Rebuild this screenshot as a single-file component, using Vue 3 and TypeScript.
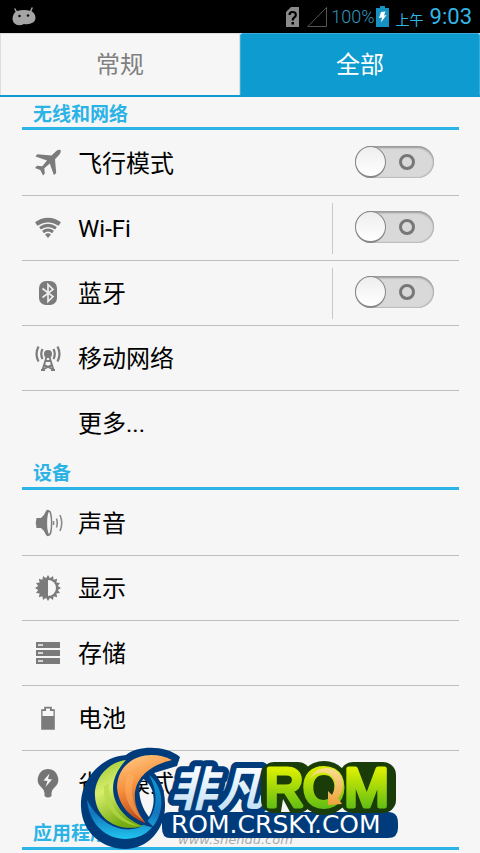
<script setup lang="ts">
import { reactive, ref } from 'vue'

type IconName =
  | 'airplane' | 'wifi' | 'bluetooth' | 'mobile' | 'none'
  | 'sound' | 'display' | 'storage' | 'battery' | 'saver'

interface Item {
  id: string
  label: string
  icon: IconName
  toggle?: boolean
  split?: boolean
}

interface Section {
  id: string
  title: string
  items: Item[]
}

const tabs = ['常规', '全部']
const activeTab = ref('全部')

const sections: Section[] = [
  {
    id: 'wireless',
    title: '无线和网络',
    items: [
      { id: 'airplane', label: '飞行模式', icon: 'airplane', toggle: true },
      { id: 'wifi', label: 'Wi-Fi', icon: 'wifi', toggle: true, split: true },
      { id: 'bluetooth', label: '蓝牙', icon: 'bluetooth', toggle: true, split: true },
      { id: 'mobile', label: '移动网络', icon: 'mobile' },
      { id: 'more', label: '更多...', icon: 'none' },
    ],
  },
  {
    id: 'device',
    title: '设备',
    items: [
      { id: 'sound', label: '声音', icon: 'sound' },
      { id: 'display', label: '显示', icon: 'display' },
      { id: 'storage', label: '存储', icon: 'storage' },
      { id: 'battery', label: '电池', icon: 'battery' },
      { id: 'saver', label: '省电模式', icon: 'saver' },
    ],
  },
  { id: 'apps', title: '应用程序', items: [] },
]

const enabled = reactive<Record<string, boolean>>({
  airplane: false,
  wifi: false,
  bluetooth: false,
})

// Outline of the brightness icon: sixteen short rays around a disc.
const sunPoints = Array.from({ length: 32 }, (_, i) => {
  const radius = i % 2 === 0 ? 13 : 10
  const angle = (i * Math.PI) / 16
  return `${(15 + radius * Math.sin(angle)).toFixed(1)},${(15 - radius * Math.cos(angle)).toFixed(1)}`
}).join(' ')
</script>

<template>
  <div class="page">
    <header class="status">
      <svg class="droid" viewBox="0 0 24 20" aria-hidden="true">
        <path d="M3 2l2 4M20 1l-2 5" stroke="#a5a5a5" stroke-width="1.5" stroke-linecap="round" />
        <path d="M5 4Q12 2 19 4C24 6 25 13 21 15.500Q17 18 12 17Q6 20 2 16C-1 12 1 6 5 4Z" fill="#a5a5a5" />
        <circle cx="7.500" cy="9" r="1.300" fill="#111" />
        <circle cx="16" cy="8.500" r="1.300" fill="#111" />
      </svg>
      <div class="status-right">
        <svg class="sim" viewBox="0 0 13 20" aria-hidden="true">
          <path d="M5 0H13V20H0V5Z" fill="#8a8a8a" />
          <path d="M3.500 8Q3.500 5 6.700 5T9.800 8Q9.800 9.500 8 10.700Q6.700 11.700 6.700 13.500" fill="none" stroke="#000" stroke-width="2.200" />
          <rect x="5.500" y="15" width="2.500" height="2.500" fill="#000" />
        </svg>
        <svg class="signal" viewBox="0 0 20 20" aria-hidden="true">
          <path d="M19.500 0.500V19.500H0.800Z" fill="none" stroke="#555" />
        </svg>
        <span class="percent">100%</span>
        <svg class="charge" viewBox="0 0 13 21" aria-hidden="true">
          <path d="M4 0H9V2H13V21H0V2H4Z" fill="#1591c2" />
          <path d="M5 6L9.500 5.500L8 9.500L10.500 9L5 16.500L6 11.500L3 12Z" fill="#fff" />
        </svg>
        <span class="meridiem">上午</span>
        <time class="clock">9:03</time>
      </div>
    </header>

    <nav class="tabs">
      <button
        v-for="tab in tabs"
        :key="tab"
        type="button"
        class="tab"
        :class="{ active: activeTab === tab }"
        @click="activeTab = tab"
      >{{ tab }}</button>
    </nav>

    <main class="content">
      <section v-for="section in sections" :key="section.id" class="section">
        <h2 class="title"><span>{{ section.title }}</span></h2>
        <ul v-if="section.items.length" class="list">
          <li v-for="item in section.items" :key="item.id" class="row">
            <button type="button" class="entry">
              <svg class="icon" viewBox="0 0 30 30" aria-hidden="true">
                <path
                  v-if="item.icon === 'airplane'"
                  d="M27.500 2C25.500 1.300 24 2.200 22.500 3.700L18.500 7.500L4.200 6.200L2.500 8.500L14 12.500L9.300 18.300L4 17.800L2 20L7.300 22L10 27.500L11.800 25.500L11.300 20.300L16.800 15.500L20.800 27L23.200 25.200L22 11.300L25.800 7.300C27.300 5.500 28.300 3.800 27.500 2Z"
                  fill="#7b7b7b"
                />
                <g v-else-if="item.icon === 'wifi'" fill="none" stroke="#7b7b7b" stroke-width="3">
                  <path d="M3.200 11Q15 3 26.800 11" stroke-width="4.200" />
                  <path d="M7 15.300Q15 9.500 23 15.300" />
                  <path d="M10 19Q15 15 20 19" />
                  <path d="M12 21.500Q15 19 18 21.500L15 25Z" fill="#7b7b7b" stroke="none" />
                </g>
                <g v-else-if="item.icon === 'bluetooth'">
                  <rect x="6" y="3" width="18" height="24" rx="7" fill="#7b7b7b" />
                  <path d="M9.500 10.500L20 18.500L15 23.500V6.500L20 11.500L9.500 19.500" fill="none" stroke="#eee" stroke-width="1.700" />
                </g>
                <g v-else-if="item.icon === 'mobile'" fill="none" stroke="#7b7b7b" stroke-width="2.200">
                  <circle cx="15" cy="11" r="4" fill="#7b7b7b" stroke="none" />
                  <path d="M9.500 6Q7 11 9.500 16M20.500 6Q23 11 20.500 16M5.500 3.500Q1.500 11 5.500 18.500M24.500 3.500Q28.500 11 24.500 18.500" />
                  <path d="M13.500 14L9.500 27M16.500 14L20.500 27M12.500 18H17.500M11.500 22L19 26M18.500 22L11 26M8 27H12M18 27H22" stroke-width="1.900" />
                </g>
                <g v-else-if="item.icon === 'sound'">
                  <path d="M3.500 10H8Q11 8 13 3Q14.500 1 16 2.500V27.500Q14.500 29 13 27Q11 22 8 20H3.500Q2 15 3.500 10Z" fill="#7b7b7b" />
                  <ellipse cx="16" cy="15" rx="2.600" ry="12" fill="#f6f6f6" stroke="#7b7b7b" stroke-width="1.400" />
                  <path d="M20.500 13V17M23.500 10.500Q25 15 23.500 19.500M27 7Q30.500 15 27 23" fill="none" stroke="#8a8a8a" stroke-width="1.600" />
                </g>
                <g v-else-if="item.icon === 'display'">
                  <polygon :points="sunPoints" fill="#7b7b7b" />
                  <path d="M15 7A8 8 0 0 1 15 23Z" fill="#f6f6f6" />
                </g>
                <g v-else-if="item.icon === 'storage'">
                  <path d="M3 4H27V10H3ZM3 12H27V18H3ZM3 20H27V26H3Z" fill="#7b7b7b" />
                  <path d="M5 7H10M5 15H10M5 23H10" stroke="#f6f6f6" stroke-width="1.500" />
                </g>
                <g v-else-if="item.icon === 'battery'">
                  <path d="M12 4.500H18V7H21V26H9V7H12Z" fill="#7b7b7b" stroke="#7b7b7b" stroke-width="1.600" />
                  <path d="M13 5.500H17V8H20.500V13H9.500V8H13Z" fill="#f6f6f6" />
                </g>
                <g v-else-if="item.icon === 'saver'">
                  <path d="M15 1A10.500 10.500 0 0 1 21.500 19.500Q18.500 22 18.500 25V28Q15 31 11.500 28V25Q11.500 22 8.500 19.500A10.500 10.500 0 0 1 15 1Z" fill="#757575" />
                  <path d="M16.500 5.500L10.500 12.500L14.500 13L12.500 19L19 11.500L15 11Z" fill="#f6f6f6" />
                </g>
              </svg>
              <span class="label">{{ item.label }}</span>
            </button>
            <span v-if="item.split" class="divider"></span>
            <input
              v-if="item.toggle"
              v-model="enabled[item.id]"
              type="checkbox"
              class="switch"
              :aria-label="item.label"
            />
          </li>
        </ul>
      </section>
    </main>

    <svg class="watermark" viewBox="76 745 328 106" aria-hidden="true">
      <defs>
        <linearGradient id="orange" x1="0" y1="0" x2="0.300" y2="1">
          <stop offset="0" stop-color="#ffd08a" />
          <stop offset="0.500" stop-color="#f78f3c" />
          <stop offset="1" stop-color="#b84517" />
        </linearGradient>
        <linearGradient id="lime" x1="0" y1="0" x2="0.400" y2="1">
          <stop offset="0" stop-color="#94c22d" />
          <stop offset="0.450" stop-color="#d8ee6c" />
          <stop offset="1" stop-color="#76ac12" />
        </linearGradient>
        <linearGradient id="azure" x1="0" y1="0" x2="0" y2="1">
          <stop offset="0" stop-color="#079bd7" />
          <stop offset="0.600" stop-color="#1476bd" />
          <stop offset="1" stop-color="#20c5ee" />
        </linearGradient>
        <linearGradient id="green" x1="0" y1="0" x2="0" y2="1">
          <stop offset="0.200" stop-color="#d9ef00" />
          <stop offset="0.850" stop-color="#62bd15" />
        </linearGradient>
        <linearGradient id="ice" x1="0" y1="0" x2="0" y2="1">
          <stop offset="0.200" stop-color="#fff" />
          <stop offset="1" stop-color="#b5daf4" />
        </linearGradient>
        <linearGradient id="gold" x1="0" y1="0" x2="0" y2="1">
          <stop offset="0" stop-color="#f8df8e" />
          <stop offset="1" stop-color="#eda13c" />
        </linearGradient>
      </defs>

      <text class="site" x="178" y="844">www.shendu.com</text>

      <path
        d="M180 757C166 745 138 745 126 755C100 757 80 780 81 807C82 833 103 849 125 849C149 849 166 828 165 804C165 788 159 778 154 773L177 766ZM141 778C155 784 157 803 149 817C140 806 137 790 141 778Z"
        fill="#003c7c"
        fill-rule="evenodd"
      />
      <path d="M149 775C167 789 165 820 146 833C122 848 90 834 87 800C98 821 118 834 138 828C156 820 161 796 149 775Z" fill="url(#azure)" />
      <path d="M126 760C104 763 91 784 96 803C101 823 122 832 143 826C121 819 98 790 126 760Z" fill="url(#lime)" />
      <path d="M104 786C102 807 120 825 139 826C120 819 108 807 109 783Z" fill="#b5da49" opacity="0.700" />
      <path d="M172 760C149 748 118 758 117 787C118 806 132 819 146 823C131 808 124 772 172 760Z" fill="url(#orange)" stroke="#003c7c" stroke-width="5" paint-order="stroke" />
      <path d="M128 774C119 795 133 815 144 821C133 808 129 791 134 777Z" fill="#ffb568" opacity="0.500" />

      <path d="M170 812H388Q398 812 398 823V828Q398 838 388 838H170Q162 838 162 828V820Q162 812 170 812Z" fill="#003c7c" />
      <text class="brand" x="170" y="806">非凡</text>

      <rect x="261" y="762" width="50" height="51" rx="13" fill="#193c09" />
      <circle cx="324" cy="788" r="27" fill="#193c09" />
      <rect x="340" y="762" width="56" height="51" rx="13" fill="#193c09" />
      <path d="M283 799L290 812H281Z" fill="#f6f6f6" />
      <text class="rom" x="265" y="806">ROM</text>
      <path d="M310 779C315 765 337 764 342 778C345 787 341 795 338 798L342 804L328 805L328 791L332 795C337 786 336 776 326 773Q317 771 310 779Z" fill="url(#gold)" />
      <text class="domain" x="171" y="833">ROM.CRSKY.COM</text>
    </svg>
  </div>
</template>

<style>
body {
  margin: 0;
  background: #f6f6f6;
}
</style>

<style scoped>
.page {
  position: relative;
  box-sizing: border-box;
  min-height: 100vh;
  overflow: hidden;
  background: #f6f6f6;
  color: #000;
  font-family: Roboto, "Noto Sans CJK SC", sans-serif;
}

.status {
  display: flex;
  align-items: center;
  justify-content: space-between;
  height: 33px;
  padding: 0 8px 0 12px;
  background: #000;
}

.status-right {
  display: flex;
  align-items: center;
  color: #33b5e5;
}

.droid {
  width: 24px;
  height: 20px;
}

.sim {
  width: 13px;
  height: 20px;
  margin-right: 8px;
}

.signal {
  width: 20px;
  height: 20px;
  margin-right: 4px;
}

.percent {
  color: #3296bd;
  font-size: 18px;
  font-weight: 300;
}

.charge {
  width: 13px;
  height: 21px;
  margin: 0 7px 0 1px;
}

.meridiem {
  margin: 6px 6px 0 0;
  font-size: 14px;
  line-height: 20px;
}

.clock {
  font-size: 22px;
  line-height: 32px;
}

.tabs {
  display: flex;
  box-sizing: border-box;
  height: 64px;
  border-bottom: 2px solid #0d9bd0;
}

.tab {
  flex: 1;
  padding: 0;
  border: solid #ddd;
  border-width: 1px 1px 0;
  background: #f6f6f6;
  color: #808080;
  font: 400 24px/60px Roboto, "Noto Sans CJK SC", sans-serif;
}

.tab.active {
  border-color: #3aaed9;
  border-bottom: 0;
  border-radius: 3px 3px 0 0;
  background: #0d9bd0;
  color: #fff;
}

.content {
  padding: 0 21px 0 22px;
}

.title {
  box-sizing: border-box;
  height: 35px;
  margin: 0;
  padding-bottom: 1px;
  font-size: 19px;
  line-height: 36px;
  font-weight: 700;
  color: #2cb3e6;
}

.section:first-child .title {
  height: 34px;
}

.title span {
  display: block;
  box-sizing: border-box;
  height: 100%;
  padding-left: 11px;
  border-bottom: 3px solid #2cb3e6;
}

.list {
  margin: 0;
  padding: 0;
  list-style: none;
}

.row {
  display: flex;
  align-items: center;
  box-sizing: border-box;
  height: 65px;
  padding-right: 25px;
  border-bottom: 1px solid #bdbdbd;
}

.row:last-child {
  border-bottom-color: transparent;
}

.entry {
  display: flex;
  flex: 1;
  align-items: center;
  gap: 15px;
  height: 100%;
  padding: 0 0 0 11px;
  border: 0;
  background: none;
  color: #000;
  font: 400 24px/32px Roboto, "Noto Sans CJK SC", sans-serif;
  text-align: left;
}

.label {
  padding-top: 2px;
}

.icon {
  width: 30px;
  height: 30px;
}

.divider {
  width: 1px;
  height: 51px;
  margin-right: 22px;
  background: #c8c8c8;
}

.switch {
  display: flex;
  align-items: center;
  justify-content: space-between;
  appearance: none;
  box-sizing: border-box;
  width: 79px;
  height: 32px;
  margin: 0 0 3px;
  padding-right: 19px;
  border-radius: 16px;
  background: #d9d9d9;
  box-shadow: inset 0 2px 2px #999, inset -1px -1px 1px #bbb;
}

.switch::before {
  content: "";
  box-sizing: border-box;
  width: 31px;
  height: 32px;
  border: 1px solid #888;
  border-bottom-width: 2px;
  border-radius: 50%;
  background: linear-gradient(#eee, #fff);
}

.switch::after {
  content: "";
  box-sizing: border-box;
  width: 16px;
  height: 16px;
  border: 3px solid #777;
  border-radius: 50%;
}

.switch:checked {
  flex-direction: row-reverse;
  padding: 0 0 0 19px;
  background: #2cb3e6;
}

.watermark {
  position: absolute;
  bottom: 2px;
  left: 50%;
  width: 328px;
  height: 106px;
  transform: translateX(-50%);
  pointer-events: none;
}

.site {
  fill: #aaa;
  font: italic 13px "DejaVu Sans", sans-serif;
}

.brand {
  fill: url(#ice);
  stroke: #003c7c;
  stroke-width: 12px;
  stroke-linejoin: round;
  paint-order: stroke;
  font: italic 700 47px "Noto Sans CJK SC", sans-serif;
}

.rom {
  fill: url(#green);
  stroke: url(#green);
  stroke-width: 5px;
  stroke-linejoin: round;
  font: 400 53px "Liberation Sans", sans-serif;
}

.domain {
  fill: #fff;
  font: 400 25px "DejaVu Sans", sans-serif;
}
</style>
